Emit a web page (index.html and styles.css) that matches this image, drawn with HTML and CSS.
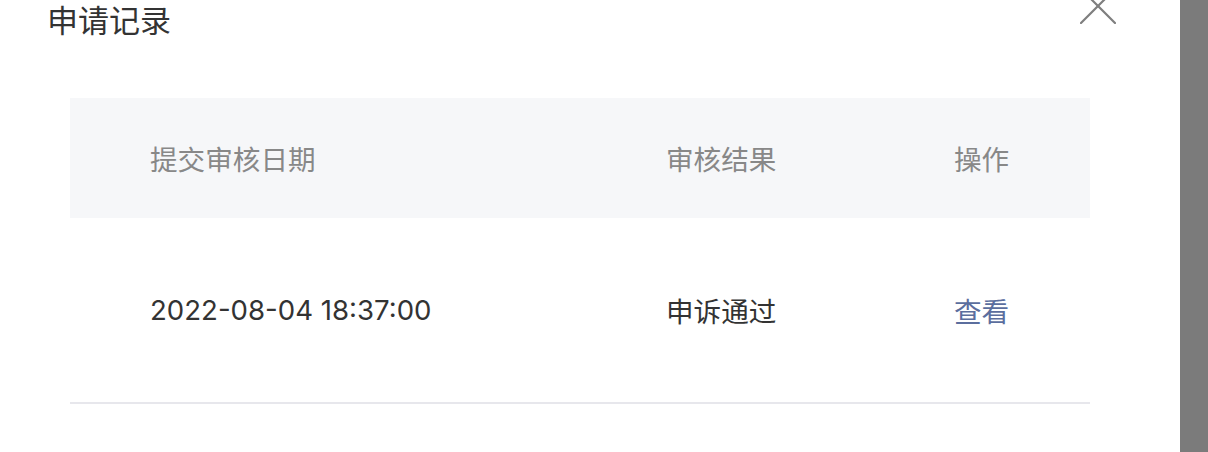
FILE: index.html
```html
<!DOCTYPE html>
<html>
<head>
    <meta charset="utf-8">
    <title>申请记录</title>
    <link rel="stylesheet" href="styles.css">
</head>
<body>
    <div class="dialog">
        <h2 class="dialog-title">申请记录</h2>
        <button class="close-button" aria-label="关闭">
            <svg viewBox="0 0 36 36" width="36" height="36" fill="none" stroke="currentColor" stroke-width="2.2" stroke-linecap="round">
                <path d="M1 1L35 35"></path>
                <path d="M35 1L1 35"></path>
            </svg>
        </button>

        <div class="record-table">
            <div class="table-row table-head">
                <div class="cell cell-date">提交审核日期</div>
                <div class="cell">审核结果</div>
                <div class="cell">操作</div>
            </div>
            <div class="table-row table-body">
                <div class="cell cell-date">2022-08-04 18:37:00</div>
                <div class="cell">申诉通过</div>
                <div class="cell"><a href="#" class="link">查看</a></div>
            </div>
        </div>
    </div>
</body>
</html>
```

FILE: styles.css
```css
html, body { margin: 0; padding: 0; height: 100%; }
body { background: #7b7b7b; font-family: Inter, "Noto Sans CJK SC", sans-serif; color: #333; overflow: hidden; }
.dialog { position: relative; width: 1180px; height: 100%; background: #fff; }
.dialog-title { margin: 0; padding: 5px 0 0 47px; font-size: 31px; line-height: 1; font-weight: normal; color: #333; }
.close-button { position: absolute; left: 1080px; top: -12px; width: 36px; height: 36px; padding: 0; border: none; background: none; color: #7f7f7f; cursor: pointer; }
.close-button svg { display: block; }
.record-table { width: 1020px; margin: 62px 0 0 70px; }
.table-row { display: grid; grid-template-columns: 596px 288px 1fr; align-items: center; font-size: 27.6px; }
.table-head { height: 120px; background: #f6f7f9; color: #888; }
.table-body { height: 184px; border-bottom: 2px solid #e7e7ec; color: #333; }
.cell-date { padding-left: 80px; }
.link { color: #5b6e9e; text-decoration: none; }
```
